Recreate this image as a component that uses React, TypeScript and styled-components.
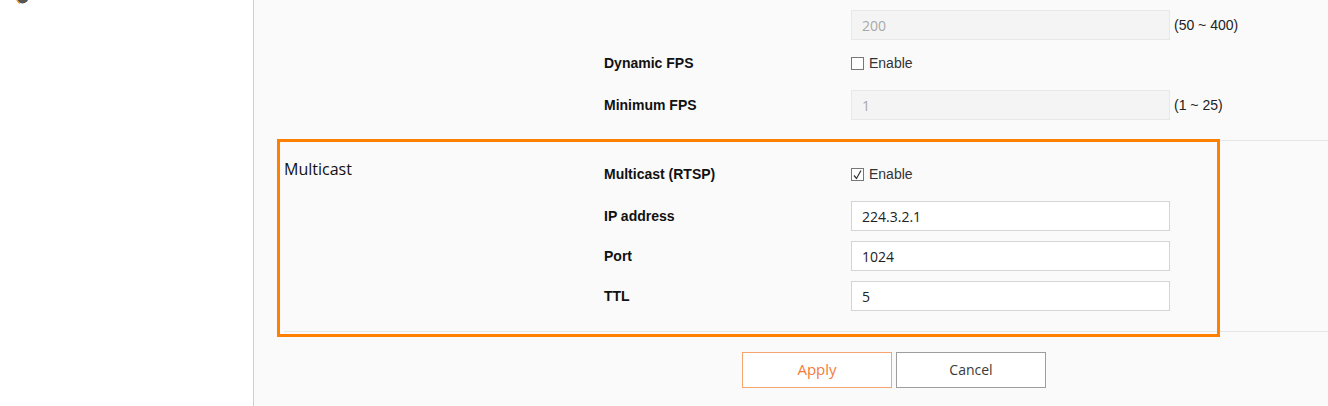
import * as React from "react"
import styled, { createGlobalStyle } from "styled-components"

const GlobalStyle = createGlobalStyle`
    html, body {
        margin: 0;
        padding: 0;
        background: #fafafa;
        overflow: hidden;
    }
    #root {
        height: 406px;
    }
`

const Page = styled.div`
    display: flex;
    height: 406px;
    font-family: "Liberation Sans", Arial, sans-serif;
`

const Sidebar = styled.div`
    width: 253px;
    flex: none;
    background: #fff;
    border-right: 1px solid #cfcfcf;
    overflow: hidden;
`

const MenuIcon = styled.svg`
    display: block;
    margin: -9px 0 0 16px;
`

const Content = styled.div`
    position: relative;
    flex: 1;
    background: #fafafa;
    padding-left: 30px;
`

const Section = styled.div<{ $top: number }>`
    display: grid;
    grid-template-columns: 320px 1fr;
    padding: ${p => p.$top}px 0 20px 0;
    border-bottom: 1px solid #e6e6e6;
`

const SectionTitle = styled.div`
    font-family: "Open Sans", sans-serif;
    font-size: 16px;
    color: #111;
    line-height: 20px;
    margin-top: -2px;
`

const Rows = styled.div`
    display: flex;
    flex-direction: column;
    gap: 10px;
`

const Row = styled.div<{ $compact?: boolean }>`
    display: grid;
    grid-template-columns: 247px 319px auto;
    height: 30px;
    align-items: ${p => (p.$compact ? "start" : "center")};
    padding-top: ${p => (p.$compact ? "6px" : "0")};
    box-sizing: border-box;
`

const Label = styled.div`
    font-size: 14px;
    font-weight: bold;
    color: #111;
    line-height: 15px;
`

const Field = styled.input`
    box-sizing: border-box;
    width: 319px;
    height: 30px;
    margin: 0;
    padding: 0 10px;
    border: 1px solid #d4d4d4;
    background: #fff;
    font-family: "Open Sans", sans-serif;
    font-size: 14px;
    color: #222;
    outline: none;

    &:disabled {
        background: #f4f4f4;
        border-color: #e8e8e8;
        color: #a8a8a8;
    }
`

const Hint = styled.span`
    margin-left: 4px;
    font-size: 14px;
    color: #222;
`

const CheckLabel = styled.label`
    display: flex;
    align-items: center;
    gap: 5px;
    font-size: 14px;
    color: #333;
    line-height: 15px;
`

const Box = styled.span`
    display: inline-flex;
    align-items: center;
    justify-content: center;
    width: 11px;
    height: 11px;
    border: 1px solid #777;
    background: #fff;
`

const ButtonBar = styled.div`
    display: flex;
    gap: 4px;
    padding: 20px 0 0 458px;
`

const Button = styled.button<{ $primary?: boolean }>`
    box-sizing: border-box;
    width: 150px;
    height: 36px;
    padding: 0 0 2px 0;
    background: #fff;
    border: 1px solid ${p => (p.$primary ? "#f7a56e" : "#9d9d9d")};
    color: ${p => (p.$primary ? "#f57b3a" : "#3a3a3a")};
    font-family: "Open Sans", sans-serif;
    font-size: ${p => (p.$primary ? "15px" : "14px")};
    cursor: pointer;
`

const Highlight = styled.div`
    position: absolute;
    left: 23px;
    top: 139px;
    width: 943px;
    height: 198px;
    box-sizing: border-box;
    border: 3px solid #ff8000;
    pointer-events: none;
`

const Check: React.FunctionComponent<{ checked?: boolean }> = ({ checked }) => (
    <CheckLabel>
        <Box>
            {checked && (
                <svg width="9" height="10" viewBox="0 0 9 10">
                    <path d="M1 5.5 L3.5 8.5 L8 0.5" fill="none" stroke="#333" strokeWidth="1.2" />
                </svg>
            )}
        </Box>
        Enable
    </CheckLabel>
)

const App: React.FunctionComponent = () => {
    return (
        <>
            <GlobalStyle />
            <Page>
                <Sidebar>
                    <MenuIcon width="13" height="13" viewBox="0 0 13 13">
                        <circle cx="6.5" cy="6.5" r="6" fill="#555" />
                        <path d="M1 9 A6 6 0 0 0 4 12.3" stroke="#f7931e" strokeWidth="1.5" fill="none" />
                    </MenuIcon>
                </Sidebar>
                <Content>
                    <Section $top={10}>
                        <div />
                        <Rows>
                            <Row>
                                <Label />
                                <Field disabled defaultValue="200" />
                                <Hint>(50 ~ 400)</Hint>
                            </Row>
                            <Row $compact>
                                <Label>Dynamic FPS</Label>
                                <Check />
                            </Row>
                            <Row>
                                <Label>Minimum FPS</Label>
                                <Field disabled defaultValue="1" />
                                <Hint>(1 ~ 25)</Hint>
                            </Row>
                        </Rows>
                    </Section>
                    <Section $top={20}>
                        <SectionTitle>Multicast</SectionTitle>
                        <Rows>
                            <Row $compact>
                                <Label>Multicast (RTSP)</Label>
                                <Check checked />
                            </Row>
                            <Row>
                                <Label>IP address</Label>
                                <Field defaultValue="224.3.2.1" />
                            </Row>
                            <Row>
                                <Label>Port</Label>
                                <Field defaultValue="1024" />
                            </Row>
                            <Row>
                                <Label>TTL</Label>
                                <Field defaultValue="5" />
                            </Row>
                        </Rows>
                    </Section>
                    <ButtonBar>
                        <Button $primary>Apply</Button>
                        <Button>Cancel</Button>
                    </ButtonBar>
                    <Highlight />
                </Content>
            </Page>
        </>
    )
}

export default App
